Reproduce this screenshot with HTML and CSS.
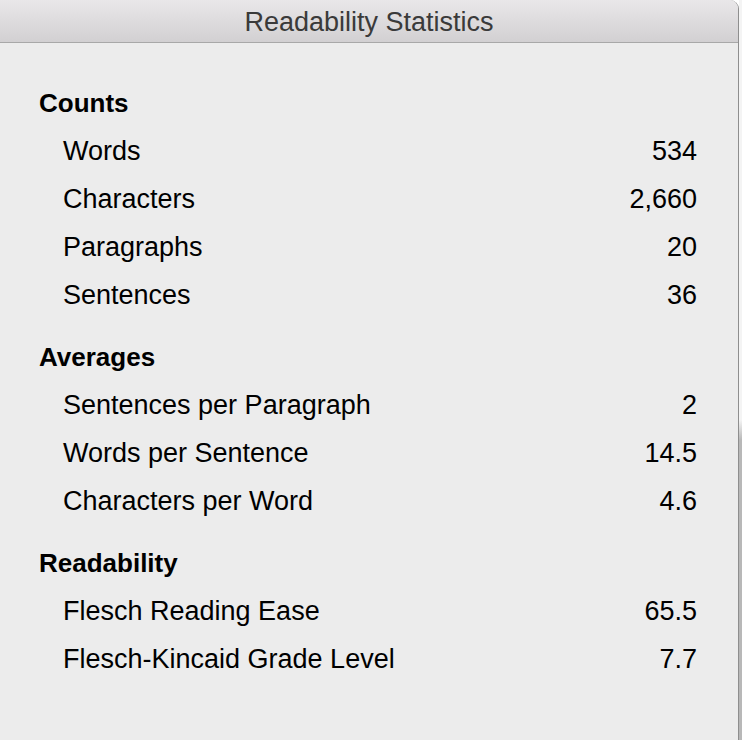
FILE: index.html
```html
<!DOCTYPE html>
<html>
<head>
<meta charset="utf-8">
<link rel="stylesheet" href="styles.css">
</head>
<body>
<div class="screen">
  <div class="window">
    <div class="titlebar">Readability Statistics</div>
    <div class="content">
      <div class="section">
        <div class="heading">Counts</div>
        <div class="row"><span>Words</span><span>534</span></div>
        <div class="row"><span>Characters</span><span>2,660</span></div>
        <div class="row"><span>Paragraphs</span><span>20</span></div>
        <div class="row"><span>Sentences</span><span>36</span></div>
      </div>
      <div class="section">
        <div class="heading">Averages</div>
        <div class="row"><span>Sentences per Paragraph</span><span>2</span></div>
        <div class="row"><span>Words per Sentence</span><span>14.5</span></div>
        <div class="row"><span>Characters per Word</span><span>4.6</span></div>
      </div>
      <div class="section">
        <div class="heading">Readability</div>
        <div class="row"><span>Flesch Reading Ease</span><span>65.5</span></div>
        <div class="row"><span>Flesch-Kincaid Grade Level</span><span>7.7</span></div>
      </div>
    </div>
  </div>
  <div class="behind"></div>
</div>
</body>
</html>
```
FILE: styles.css
```css
html, body {
  margin: 0;
  padding: 0;
}
body {
  width: 742px;
  height: 740px;
  overflow: hidden;
  font-family: "Liberation Sans", Arial, sans-serif;
  color: #000;
}
.screen {
  display: flex;
  height: 740px;
}
.window {
  width: 738px;
  height: 740px;
  background: #ececec;
  border-right: 1px solid #8e8e8e;
  border-top-right-radius: 9px;
  overflow: hidden;
  flex: none;
}
.behind {
  flex: 1;
  background: linear-gradient(#f4f4f4 0, #f4f4f4 420px, #b8b8b8 440px, #b8b8b8 100%);
}
.titlebar {
  height: 43px;
  box-sizing: border-box;
  border-bottom: 1px solid #a8a8a8;
  background: linear-gradient(#e9e7e9, #d2d0d2);
  text-align: center;
  font-size: 27px;
  line-height: 44px;
  color: #3a3a3a;
}
.content {
  padding: 36px 41px 0 39px;
  display: flex;
  flex-direction: column;
  gap: 14px;
}
.heading {
  font-size: 26px;
  font-weight: bold;
  line-height: 48px;
}
.row {
  display: flex;
  justify-content: space-between;
  padding-left: 24px;
  font-size: 27px;
  line-height: 48px;
}
```
